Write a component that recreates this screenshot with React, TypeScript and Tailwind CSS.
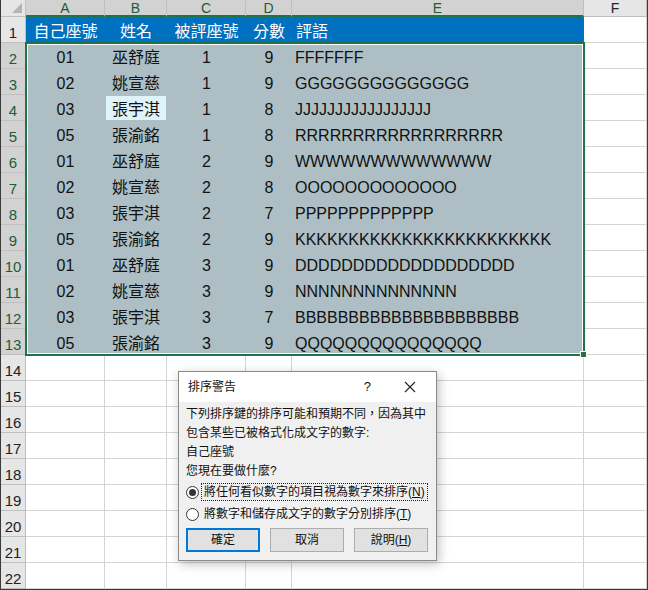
import React from "react";

const cols = ["A", "B", "C", "D", "E", "F"];

const header = ["自己座號", "姓名", "被評座號", "分數", "評語"];

const data: string[][] = [
  ["01", "巫舒庭", "1", "9", "FFFFFFF"],
  ["02", "姚宣慈", "1", "9", "GGGGGGGGGGGGGG"],
  ["03", "張宇淇", "1", "8", "JJJJJJJJJJJJJJJJJ"],
  ["05", "張渝銘", "1", "8", "RRRRRRRRRRRRRRRRRR"],
  ["01", "巫舒庭", "2", "9", "WWWWWWWWWWWWW"],
  ["02", "姚宣慈", "2", "8", "OOOOOOOOOOOOO"],
  ["03", "張宇淇", "2", "7", "PPPPPPPPPPPPP"],
  ["05", "張渝銘", "2", "9", "KKKKKKKKKKKKKKKKKKKKKKKK"],
  ["01", "巫舒庭", "3", "9", "DDDDDDDDDDDDDDDDDDD"],
  ["02", "姚宣慈", "3", "9", "NNNNNNNNNNNNNN"],
  ["03", "張宇淇", "3", "7", "BBBBBBBBBBBBBBBBBBBBB"],
  ["05", "張渝銘", "3", "9", "QQQQQQQQQQQQQQQ"],
];

const rowNums = Array.from({ length: 22 }, (_, i) => i + 1);

function Cell({ r, c }: { r: number; c: number }) {
  // row 1: blue title row
  if (r === 1) {
    if (c === 5) return <div className="border-r border-b border-[#d4d4d4] bg-white" />;
    return (
      <div
        className={
          "flex items-center bg-[#0070c0] pt-[4px] text-[16px] text-white " +
          (c === 4 ? "justify-start pl-[4px]" : "justify-center")
        }
      >
        {header[c]}
      </div>
    );
  }
  if (r >= 2 && r <= 13 && c < 5) {
    const v = data[r - 2][c];
    const active = r === 4 && c === 1;
    return (
      <div className="relative flex items-center bg-[#adbfc4] pt-[3px] text-[16px] text-[#111]">
        {active && <div className="absolute top-[1px] left-[1px] right-[1px] bottom-[1px] bg-[#def3fa]" />}
        <div className={"relative w-full " + (c === 4 ? "pl-[3px] whitespace-nowrap" : "text-center")}>{v}</div>
      </div>
    );
  }
  return <div className="border-r border-b border-[#d4d4d4] bg-white" />;
}

function Dialog() {
  return (
    <div className="absolute left-[177px] top-[371px] w-[259px] h-[190px] border border-[#8a8a8a] bg-[#f0f0f0] shadow-[2px_3px_10px_rgba(0,0,0,0.25)] text-[12px] text-[#111]">
      <div className="flex h-[30px] items-center bg-white pl-[9px]">
        <span>排序警告</span>
        <span className="ml-auto mr-[33px] text-[13px]">?</span>
        <svg width="12" height="12" viewBox="0 0 12 12" className="mr-[20px]">
          <path d="M1 1L11 11M11 1L1 11" stroke="#222" strokeWidth="1.1" />
        </svg>
      </div>
      <div className="px-[7px] pt-[3px]">
        <div className="leading-[19px]">
          <div>下列排序鍵的排序可能和預期不同，因為其中</div>
          <div>包含某些已被格式化成文字的數字:</div>
          <div>自己座號</div>
          <div>您現在要做什麼?</div>
        </div>
        <div className="mt-[2px] flex h-[18px] items-center">
          <span className="flex h-[13px] w-[13px] items-center justify-center rounded-full border border-[#333] bg-white">
            <span className="h-[7px] w-[7px] rounded-full bg-[#333]" />
          </span>
          <span className="ml-[2px] flex h-[18px] items-center border border-dotted border-[#222] px-[2px] leading-none">
            將任何看似數字的項目視為數字來排序(<span className="underline">N</span>)
          </span>
        </div>
        <div className="mt-[4px] flex h-[18px] items-center">
          <span className="h-[13px] w-[13px] rounded-full border border-[#333] bg-white" />
          <span className="ml-[5px] leading-none">
            將數字和儲存成文字的數字分別排序(<span className="underline">T</span>)
          </span>
        </div>
        <div className="mt-[5px] flex gap-[10px]">
          <button className="h-[24px] w-[74px] border-2 border-[#0078d7] bg-[#e1e1e1] text-[12px]">確定</button>
          <button className="h-[24px] w-[74px] border border-[#adadad] bg-[#e1e1e1] text-[12px]">取消</button>
          <button className="h-[24px] w-[74px] border border-[#adadad] bg-[#e1e1e1] text-[12px]">
            說明(<span className="underline">H</span>)
          </button>
        </div>
      </div>
    </div>
  );
}

export default function App() {
  return (
    <div className="relative h-[590px] w-[648px] overflow-hidden border-l border-r border-b border-[#3a3a3a] bg-white font-['Liberation_Sans','Noto_Sans_CJK_TC',sans-serif]">
      <div className="grid grid-cols-[25px_79px_62px_79px_46px_292px_1fr] grid-rows-[17px_repeat(22,26px)]">
        {/* corner */}
        <div className="relative border-r border-b border-[#bfbfbf] bg-[#e6e6e6]">
          <svg width="12" height="12" viewBox="0 0 12 12" className="absolute right-[2px] bottom-[2px]">
            <path d="M11 1V11H1Z" fill="#b4b4b4" />
          </svg>
        </div>
        {cols.map((l, i) => (
          <div
            key={l}
            className={
              "flex items-center justify-center border-r border-[#bfbfbf] text-[14px] leading-none " +
              (i < 5
                ? "border-b-2 border-b-[#217346] bg-[#d2d2d2] text-[#1d5c38]"
                : "border-b border-b-[#bfbfbf] bg-[#e6e6e6] text-[#222]")
            }
          >
            {l}
          </div>
        ))}
        {rowNums.map((r) => (
          <React.Fragment key={r}>
            <div
              className={
                "flex items-end justify-center border-r border-b border-[#bfbfbf] pb-[2px] text-[15px] leading-none " +
                (r >= 2 && r <= 13 ? "bg-[#d2d2d2] text-[#1d5c38]" : "bg-[#e6e6e6] text-[#222]")
              }
            >
              {r}
            </div>
            {[0, 1, 2, 3, 4, 5].map((c) => (
              <Cell key={c} r={r} c={c} />
            ))}
          </React.Fragment>
        ))}
      </div>

      {/* selection outline */}
      <div className="absolute left-[24px] top-[42px] h-[314px] w-[560px] border-2 border-[#217346]">
        <div className="h-full w-full border border-white" />
      </div>
      <div className="absolute left-[579px] top-[351px] h-[7px] w-[7px] border border-white bg-[#217346]" />

      <Dialog />
    </div>
  );
}
